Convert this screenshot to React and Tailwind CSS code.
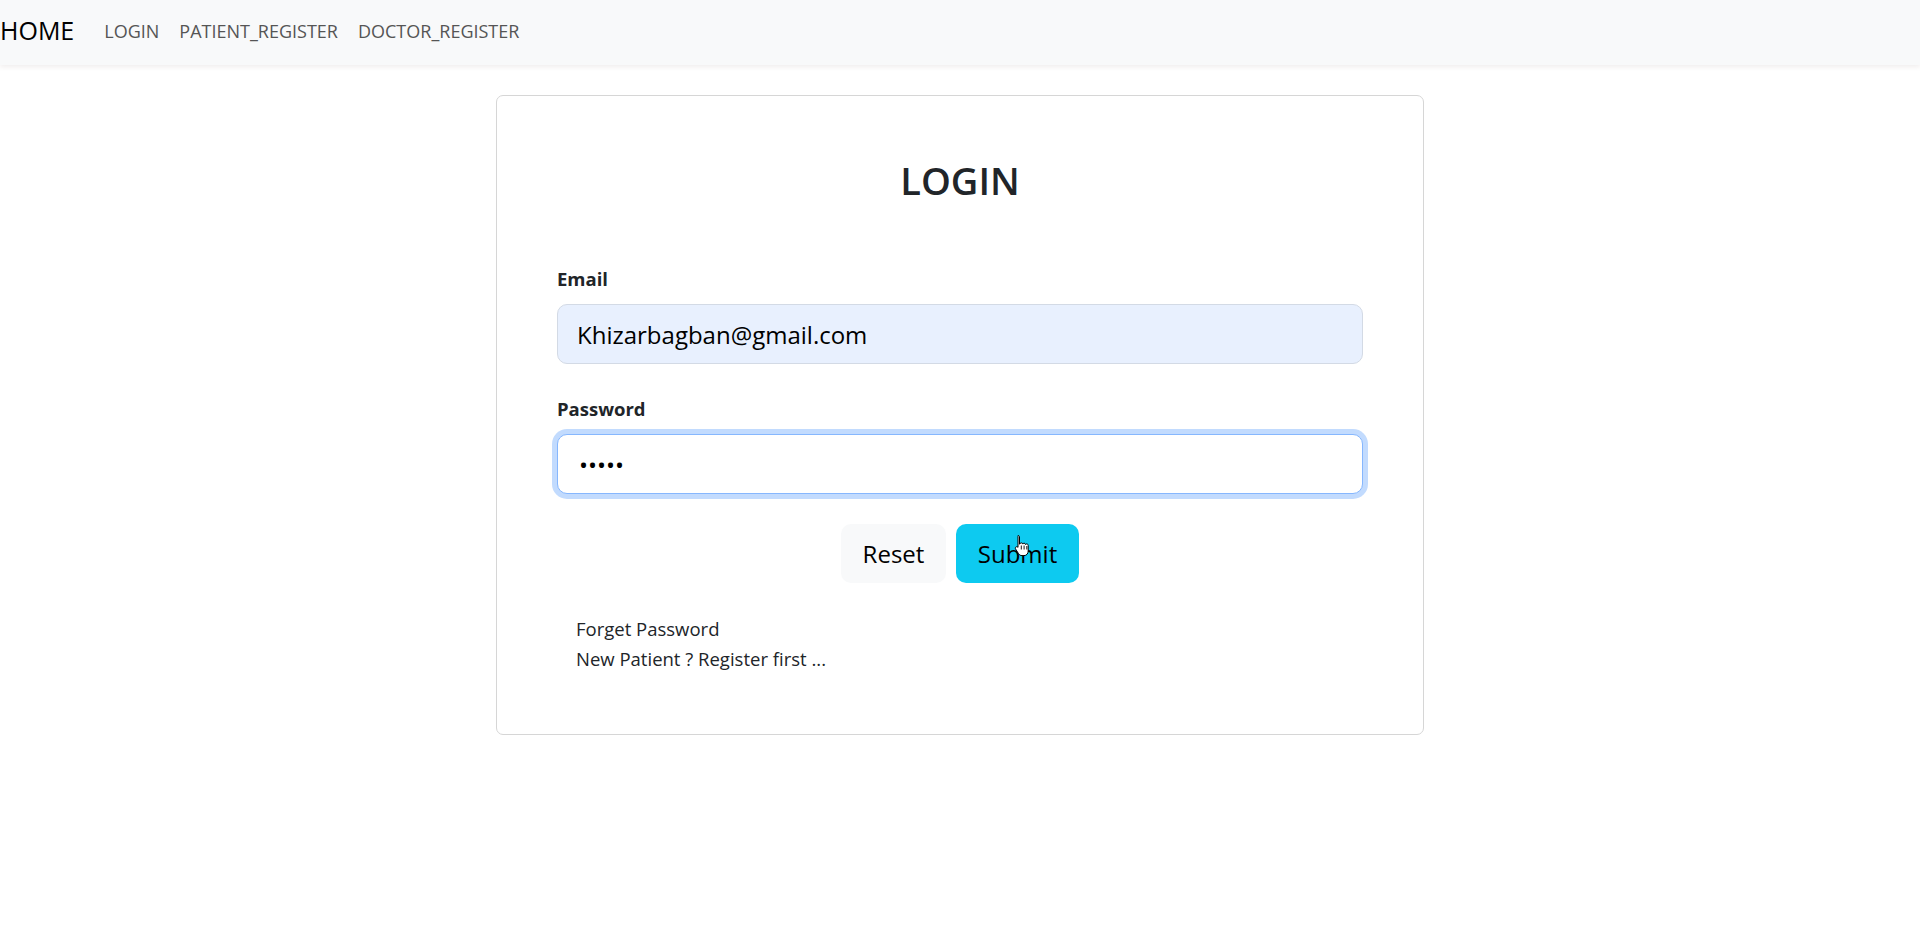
import { useState } from 'react';

const FONT = { fontFamily: '"Open Sans", "Noto Sans", Arial, sans-serif' };

function Navbar() {
    return (
        <nav className="flex h-[65px] items-center bg-[#f8f9fa] pb-[4px] shadow-[0_2px_5px_rgba(60,30,30,0.08)]">
            <a className="mr-[20px] text-[25px] leading-[37px] text-black" href="#">HOME</a>
            <div className="flex">
                {['LOGIN', 'PATIENT_REGISTER', 'DOCTOR_REGISTER'].map((l) => (
                    <a key={l} href="#" className="px-[10px] text-[18px] leading-[30px] text-[#555]">{l}</a>
                ))}
            </div>
        </nav>
    );
}

function HandCursor() {
    return (
        <svg className="pointer-events-none absolute left-[58px] top-[10px]" width="16" height="24" viewBox="0 0 16 24">
            <path
                d="M4 1.5c.9 0 1.5.6 1.5 1.5v7.2l.3-.1c.2-.9.8-1.3 1.5-1.3s1.3.5 1.4 1.3c.3-.6.8-.9 1.4-.9.8 0 1.3.5 1.4 1.3.3-.4.7-.6 1.2-.6.9 0 1.5.7 1.5 1.6v5.5c0 2.6-1.6 4.6-4.2 4.6H8c-1.6 0-2.6-.7-3.5-2L1.6 15c-.5-.8-.3-1.700.4-2.1.7-.4 1.5-.2 2 .5V3c0-.9.1-1.5 0-1.5z"
                fill="#fff"
                stroke="#000"
                strokeWidth="1"
                strokeLinejoin="round"
            />
            <path d="M7.3 11.5v4M10.1 11.5v4M12.8 12v3.5" stroke="#000" strokeWidth="0.9" />
        </svg>
    );
}

export default function App() {
    const [email, setEmail] = useState('Khizarbagban@gmail.com');
    const [password, setPassword] = useState('12345');

    return (
        <div className="min-h-[928px] bg-white text-[#212529]" style={FONT}>
            <Navbar />

            <div className="flex justify-center pt-[30px]">
                <div className="w-[928px] rounded-[7px] border border-[#d6d6d6] p-[60px]">
                    <h2 className="mb-[60px] text-center text-[38px] font-semibold leading-[48px] text-[#212529]">LOGIN</h2>

                    <form onSubmit={(e) => e.preventDefault()}>
                        <div className="mb-[30px]">
                            <label className="mb-[10px] block text-[18.5px] font-bold leading-[30px]">Email</label>
                            <input
                                type="email"
                                value={email}
                                onChange={(e) => setEmail(e.target.value)}
                                className="block h-[60px] w-full rounded-[10px] border border-[#d3dae5] bg-[#e8f0fe] px-[19px] text-[24px] text-black outline-none"
                            />
                        </div>

                        <div className="mb-[30px]">
                            <label className="mb-[10px] block text-[18.5px] font-bold leading-[30px]">Password</label>
                            <input
                                type="password"
                                value={password}
                                onChange={(e) => setPassword(e.target.value)}
                                className="block h-[60px] w-full rounded-[10px] border border-[#86b7fe] bg-white px-[21px] text-[24px] text-black shadow-[0_0_0_5px_rgba(13,110,253,0.25)] outline-none"
                            />
                        </div>

                        <div className="flex justify-center gap-[10px]">
                            <button type="reset" className="h-[59px] w-[105px] rounded-[10px] bg-[#f8f9fa] text-[24px] text-black">Reset</button>
                            <button type="submit" className="relative h-[59px] w-[123px] rounded-[10px] bg-[#0dcaf0] text-[24px] text-black">
                                Submit
                                <HandCursor />
                            </button>
                        </div>
                    </form>

                    <div className="mt-[31px] pl-[19px] text-[18.5px] leading-[30px]">
                        <div>Forget Password</div>
                        <div>New Patient ? Register first ...</div>
                    </div>
                </div>
            </div>
        </div>
    );
}
